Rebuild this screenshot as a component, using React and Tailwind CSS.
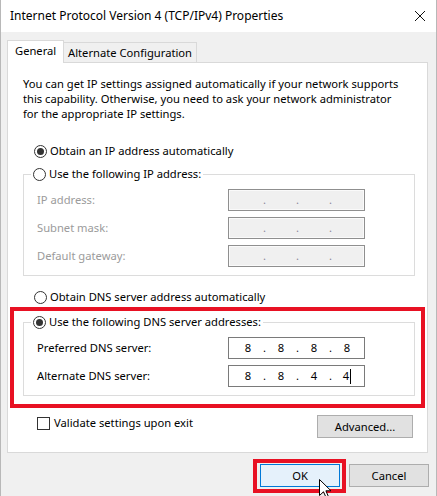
import React from 'react'

function Radio({ checked }) {
  return (
    <span className="w-[13px] h-[13px] rounded-full border border-[#333333] bg-white flex items-center justify-center shrink-0">
      {checked && <span className="w-[7px] h-[7px] rounded-full bg-[#333333]" />}
    </span>
  )
}

function RadioRow({ checked, children, className = '' }) {
  return (
    <div className={`flex items-center gap-[3px] h-[16px] leading-[16px] ${className}`}>
      <Radio checked={checked} />
      <span>{children}</span>
    </div>
  )
}

function IpField({ values = ['', '', '', ''], disabled = false, caret = false }) {
  return (
    <div
      className={`w-[137px] h-[22px] border flex items-center pl-[5px] leading-[20px] ${
        disabled
          ? 'bg-[#f0f0f0] border-[#8f8f8f] shadow-[inset_0_0_0_1px_#fafafa] text-[#8a8a9a]'
          : 'bg-white border-[#7a7a7a] text-black'
      }`}
    >
      {values.map((v, i) => (
        <React.Fragment key={i}>
          <span className="w-[28px] text-center flex justify-center items-center">
            {v}
            {caret && i === 3 && <span className="inline-block w-[1px] h-[15px] bg-black ml-[1px]" />}
          </span>
          {i < 3 && <span className="w-[5px] text-center">.</span>}
        </React.Fragment>
      ))}
    </div>
  )
}

function FieldRow({ label, disabled, children }) {
  return (
    <div className="grid grid-cols-[191px_137px] items-center h-[22px]">
      <span className={disabled ? 'text-[#9b9b9b]' : 'text-black'}>{label}</span>
      {children}
    </div>
  )
}

export default function App() {
  return (
    <div className="w-[437px] h-[496px] bg-[#f0f0f0] border-x border-[#b8b8b8] relative overflow-hidden font-['Noto_Sans',sans-serif] text-[11.2px] text-black">
      {/* title bar */}
      <div className="h-[32px] bg-white flex items-center justify-between pl-[9px] pr-[11px]">
        <span className="text-[12px]">Internet Protocol Version 4 (TCP/IPv4) Properties</span>
        <svg width="10" height="10" viewBox="0 0 10 10" stroke="#111" strokeWidth="1">
          <path d="M0 0L10 10M10 0L0 10" />
        </svg>
      </div>

      <div className="pl-[6px] pr-[8px]">
        {/* tabs */}
        <div className="flex items-end h-[22px] mt-[8px]">
          <div className="relative z-10 h-[23px] -mb-[1px] w-[57px] bg-white border-t border-x border-[#d9d9d9] pl-[7px] pt-[2px] leading-[16px]">
            General
          </div>
          <div className="h-[20px] w-[133px] border-t border-r border-[#d9d9d9] pl-[4px] leading-[20px]">
            Alternate Configuration
          </div>
        </div>

        {/* panel */}
        <div className="w-[421px] h-[391px] bg-white border border-[#d9d9d9] pl-[15px] pr-[12px] pt-[13px]">
          <p className="leading-[15px]">
            You can get IP settings assigned automatically if your network supports
            <br />
            this capability. Otherwise, you need to ask your network administrator
            <br />
            for the appropriate IP settings.
          </p>

          <RadioRow checked className="mt-[22px] ml-[11px]">Obtain an IP address automatically</RadioRow>

          <fieldset className="mt-[7px] w-[392px] border border-[#dcdcdc] px-[13px] pb-[8px]">
            <legend className="-ml-[6px] px-[2px]">
              <RadioRow>Use the following IP address:</RadioRow>
            </legend>
            <div className="flex flex-col gap-[6px] pt-[7px]">
              <FieldRow label="IP address:" disabled><IpField disabled /></FieldRow>
              <FieldRow label="Subnet mask:" disabled><IpField disabled /></FieldRow>
              <FieldRow label="Default gateway:" disabled><IpField disabled /></FieldRow>
            </div>
          </fieldset>

          <RadioRow className="mt-[13px] ml-[11px]">Obtain DNS server address automatically</RadioRow>

          <div className="mt-[2px] -ml-[13px] w-[415px] border-4 border-[#e81123] pl-[9px] pr-[6px] pt-[3px] pb-[8px]">
            <fieldset className="w-[392px] border border-[#dcdcdc] px-[13px] pb-[8px]">
              <legend className="-ml-[6px] px-[2px]">
                <RadioRow checked>Use the following DNS server addresses:</RadioRow>
              </legend>
              <div className="flex flex-col gap-[6px] pt-[7px]">
                <FieldRow label="Preferred DNS server:"><IpField values={['8', '8', '8', '8']} /></FieldRow>
                <FieldRow label="Alternate DNS server:"><IpField values={['8', '8', '4', '4']} caret /></FieldRow>
              </div>
            </fieldset>
          </div>

          <div className="mt-[7px] flex justify-between items-start">
            <label className="ml-[14px] flex items-center gap-[4px] h-[16px] leading-[16px]">
              <span className="w-[13px] h-[13px] border border-[#333333] bg-white" />
              Validate settings upon exit
            </label>
            <button className="mr-[2px] w-[96px] h-[23px] bg-[#e1e1e1] border border-[#adadad] leading-[21px]">
              Advanced...
            </button>
          </div>
        </div>

        {/* dialog buttons */}
        <div className="mt-[6px] flex justify-end items-start gap-[3px] -mr-[1px]">
          <div className="border-4 border-[#e81123] pl-[3px] pr-[2px] pt-[1px] pb-[2px]">
            <button className="w-[80px] h-[23px] bg-[#e5f1fb] border border-[#0078d7] leading-[21px]">OK</button>
          </div>
          <button className="mt-[5px] w-[80px] h-[23px] bg-[#e1e1e1] border border-[#adadad] leading-[21px]">Cancel</button>
        </div>
      </div>

      {/* mouse pointer */}
      <svg className="absolute left-[318px] top-[479px]" width="13" height="20" viewBox="0 0 13 20">
        <path d="M0.5 0.5L0.5 16.5L4.5 12.8L7.3 19L9.6 18L6.9 11.8L12 11.8Z" fill="#fff" stroke="#000" strokeWidth="1" />
      </svg>
    </div>
  )
}
